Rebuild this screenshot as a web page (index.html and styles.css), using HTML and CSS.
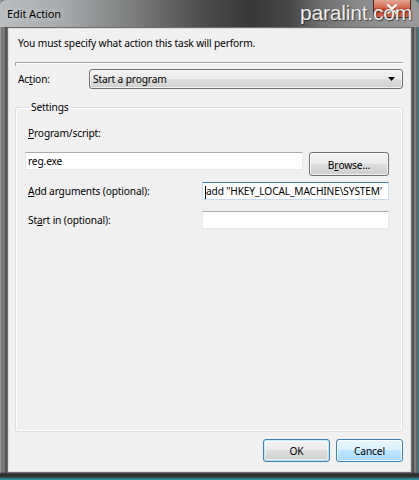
FILE: index.html
```html
<!DOCTYPE html>
<html>
<head>
<meta charset="utf-8">
<link rel="stylesheet" href="styles.css">
</head>
<body>
<div class="window">
  <div class="titlebar">
    <span class="title">Edit Action</span>
    <div class="close"><svg width="12" height="10" viewBox="0 0 12 10"><path d="M2 1 L10 9 M10 1 L2 9" stroke="#fff" stroke-width="2.2" stroke-linecap="round"/></svg></div>
    <span class="watermark">paralint.com</span>
  </div>
  <div class="client">
    <p class="intro">You must specify what action this task will perform.</p>
    <div class="sep"></div>
    <div class="action-row">
      <span class="label">Ac<u>t</u>ion:</span>
      <div class="combo"><span>Start a program</span><svg width="7" height="4" viewBox="0 0 7 4"><path d="M0 0 H7 L3.5 4 Z" fill="#000"/></svg></div>
    </div>
    <fieldset class="group">
      <legend>Settings</legend>
      <div class="label prog-label"><u>P</u>rogram/script:</div>
      <div class="prog-row">
        <div class="input wide">reg.exe</div>
        <div class="btn browse">B<u>r</u>owse...</div>
      </div>
      <div class="field-row">
        <span class="label"><u>A</u>dd arguments (optional):</span>
        <div class="input side focus"><span class="caret"></span>add "HKEY_LOCAL_MACHINE\SYSTEM'</div>
      </div>
      <div class="field-row">
        <span class="label">St<u>a</u>rt in (optional):</span>
        <div class="input side"></div>
      </div>
    </fieldset>
    <div class="buttons">
      <div class="btn ok">OK</div>
      <div class="btn cancel">Cancel</div>
    </div>
  </div>
</div>
</body>
</html>
```
FILE: styles.css
```css
* { box-sizing: border-box; }
html, body { margin: 0; padding: 0; }
body {
  width: 419px;
  height: 480px;
  overflow: hidden;
  font-family: "Noto Sans", "Open Sans", sans-serif;
  font-size: 10.2px;
  letter-spacing: -0.15px;
  color: #000;
}
.window {
  width: 419px;
  height: 480px;
  display: flex;
  flex-direction: column;
  background:
    linear-gradient(to bottom, transparent 472px, #2a2a2a 474px, #3a3a3a 477px, #2f8ea0 479px),
    linear-gradient(to right, #a8a8a8 0, #6c6c6c 2px, #8a8a8a 4px, #3a3a3a 6px, #7a7a7a 7px, #7a7a7a 412px, #3c3c3c 413px, #8c8c8c 415px, #5a5a5a 417px, #2e8fa3 419px);
}
.titlebar {
  position: relative;
  height: 27px;
  flex: none;
  display: flex;
  align-items: center;
  padding-left: 7px;
  background: linear-gradient(to right, #b9bdbf 0, #a7abad 60px, #7d7f80 130px, #4d4d4d 200px, #383838 250px, #474747 290px, #6e6e6e 320px, #8a8a8a 360px, #9a9a9a 419px);
  border-radius: 6px 6px 0 0;
}
.title {
  font-size: 11px;
  letter-spacing: -0.1px;
  color: #000;
  text-shadow: 0 0 6px rgba(255,255,255,0.7);
}
.close {
  position: absolute;
  left: 373px;
  top: 0;
  width: 38px;
  height: 18px;
  border-radius: 0 0 4px 4px;
  background: linear-gradient(to bottom, #e4a796 0, #d4674f 45%, #c23a1d 55%, #d2684c 100%);
  border: 1px solid #4b2a22;
  border-top: none;
  display: flex;
  align-items: center;
  justify-content: center;
}
.watermark {
  position: absolute;
  left: 300px;
  top: 1px;
  font-family: "Liberation Sans", sans-serif;
  font-size: 21px;
  letter-spacing: -0.2px;
  color: #ececec;
  text-shadow: 0 0 1px #555, 1px 1px 1px rgba(0,0,0,0.5);
}
.client {
  flex: 1;
  margin: 0 7px 7px 7px;
  background: #f0f0f0;
  border: 1px solid #6e6e6e;
  box-shadow: inset 0 0 0 1px #dcdcdc;
  display: flex;
  flex-direction: column;
  padding: 0 8px 0 7px;
}
.intro {
  margin: 8px 0 0 3px;
  height: 15px;
  line-height: 15px;
}
.sep {
  margin-top: 11px;
  height: 4px;
  border-top: 1px solid #a0a0a0;
  border-left: 1px solid #a0a0a0;
  box-shadow: inset 1px 1px 0 #fff;
}
.action-row {
  margin-top: 3px;
  display: flex;
  align-items: center;
  height: 20px;
}
.action-row .label {
  width: 74px;
  padding-left: 3px;
}
.combo {
  flex: 1;
  height: 20px;
  border: 1px solid #707070;
  border-radius: 3px;
  background: linear-gradient(to bottom, #f2f2f2 0, #ebebeb 50%, #dddddd 50%, #cfcfcf 100%);
  box-shadow: inset 0 0 0 1px rgba(255,255,255,0.7);
  display: flex;
  align-items: center;
  justify-content: space-between;
  padding: 0 7px 0 3px;
}
.group {
  margin: 12px 0 0 0;
  padding: 0 13px 0 9px;
  height: 331px;
  border: 1px solid #d5dfe5;
  border-radius: 3px;
  box-shadow: inset 0 0 0 1px #fff;
}
.group legend {
  padding: 0 2px;
  margin-left: 4px;
  line-height: 13px;
}
.prog-label {
  margin-top: 12px;
  padding-left: 3px;
  height: 15px;
  line-height: 15px;
}
.prog-row {
  margin-top: 11px;
  display: flex;
  align-items: flex-start;
  gap: 6px;
}
.input {
  height: 18px;
  background: #fff;
  border: 1px solid #e3e9ef;
  border-top-color: #abadb3;
  line-height: 16px;
  padding: 0 2px;
  white-space: nowrap;
  overflow: hidden;
}
.input.wide { width: 278px; }
.input.side { width: 187px; margin-left: auto; }
.input.focus {
  border-color: #c5daed;
  border-top-color: #3d7bad;
  padding-left: 2px;
}
.caret {
  display: inline-block;
  width: 1px;
  height: 13px;
  background: #000;
  vertical-align: middle;
}
.btn {
  height: 24px;
  border: 1px solid #707070;
  border-radius: 3px;
  background: linear-gradient(to bottom, #f2f2f2 0, #ebebeb 50%, #dddddd 50%, #cfcfcf 100%);
  box-shadow: inset 0 0 0 1px rgba(255,255,255,0.75);
  display: flex;
  align-items: center;
  justify-content: center;
  padding-top: 1px;
}
.browse { width: 80px; }
.field-row {
  display: flex;
  align-items: center;
  height: 18px;
  margin-top: 6px;
}
.field-row + .field-row { margin-top: 11px; }
.field-row .label { padding-left: 3px; }
.buttons {
  margin-top: 7px;
  display: flex;
  justify-content: flex-end;
  gap: 6px;
}
.buttons .btn { width: 67px; height: 23px; }
.ok {
  border-color: #3c7fb1;
  box-shadow: inset 0 0 0 1px #48d6ff55, inset 0 0 0 2px rgba(255,255,255,0.5);
}
.cancel {
  border-color: #3c7fb1;
  background: linear-gradient(to bottom, #eaf6fd 0, #d9f0fc 50%, #bee6fd 50%, #a7d9f5 100%);
}
u { text-decoration: underline; text-underline-offset: 1px; }
```
